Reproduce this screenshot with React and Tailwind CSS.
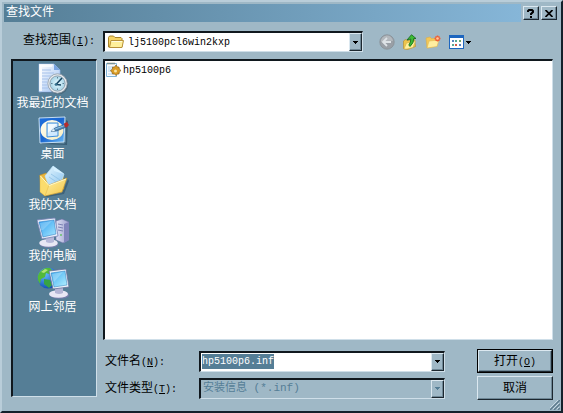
import { useEffect, useRef } from "react";

const FILES = [{ id: "hp5100p6", name: "hp5100p6" }];

const PLACES = [
  { id: "recent", label: "我最近的文档", Icon: RecentIcon },
  { id: "desktop", label: "桌面", Icon: DesktopIcon },
  { id: "documents", label: "我的文档", Icon: DocumentsIcon },
  { id: "computer", label: "我的电脑", Icon: ComputerIcon },
  { id: "network", label: "网上邻居", Icon: NetworkIcon },
];

const TOOLS = [
  { id: "back", label: "后退", Icon: BackIcon },
  { id: "up", label: "向上一级", Icon: UpIcon },
  { id: "new", label: "新建文件夹", Icon: NewFolderIcon },
];

const SUNKEN = "border border-t-2 border-l-2 border-t-[#10181e] border-l-[#10181e] border-b-[#cfdfe9] border-r-[#cfdfe9]";
const RAISED = "border border-t-[#dbe8f0] border-l-[#dbe8f0] border-b-[#1c272f] border-r-[#1c272f] shadow-[inset_-1px_-1px_0_#6e8796]";

// === Icons ===
function RecentIcon() {
  return (
    <svg width="32" height="32" viewBox="0 0 32 32">
      <defs>
        <linearGradient id="rc-page" x1="0" y1="0" x2="1" y2="1">
          <stop offset="0" stopColor="#ffffff" /><stop offset="1" stopColor="#9cc0f2" />
        </linearGradient>
        <radialGradient id="rc-face"><stop offset="0" stopColor="#e9fbff" /><stop offset="1" stopColor="#a4d3e6" /></radialGradient>
      </defs>
      <path d="M3 29h18l2 1H5z" fill="#36586d" opacity=".6" />
      <path d="M2 1h15l6 6v22H2z" fill="url(#rc-page)" stroke="#8fb2e4" strokeWidth=".7" />
      <path d="M2 1h14l-1 3H5v24H2z" fill="#fff" opacity=".7" />
      <path d="M17 1v6h6z" fill="#79a5e2" />
      <path d="M5 7h9M5 10h12M5 13h9M5 16h6M5 19h5M5 22h5M5 25h6" stroke="#a6c1ea" />
      <circle cx="21.500" cy="21.500" r="9.800" fill="#3f5c6d" opacity=".6" />
      <circle cx="20.500" cy="20.500" r="9.700" fill="#e6eaee" stroke="#8c98a3" strokeWidth=".8" />
      <circle cx="20.500" cy="20.500" r="7.600" fill="url(#rc-face)" stroke="#8ea0ad" />
      <path d="M20.500 14v1.500M20.500 25.500V27M14 20.500h1.500M25.500 20.500H27" stroke="#5f8296" />
      <path d="M25 15l-6 6.500 5 .5" stroke="#174663" strokeWidth="1.500" fill="none" />
      <circle cx="19" cy="21.500" r="1.300" fill="#34718f" />
    </svg>
  );
}

function DesktopIcon() {
  return (
    <svg width="32" height="32" viewBox="0 0 32 32">
      <defs>
        <linearGradient id="dk-pad" x1="0" y1="0" x2="1" y2="1">
          <stop offset="0" stopColor="#1f6fdc" /><stop offset=".5" stopColor="#1a66d0" /><stop offset="1" stopColor="#6cbcf7" />
        </linearGradient>
        <linearGradient id="dk-in" x1="0" y1="0" x2="1" y2="1">
          <stop offset="0" stopColor="#fffef2" /><stop offset="1" stopColor="#f7edc0" />
        </linearGradient>
      </defs>
      <path d="M4 28l23 2 2-2V6l2 1-1 24-25-1z" fill="#2f5168" opacity=".7" />
      <path d="M2 4l26-1-1 25-24 1z" fill="url(#dk-pad)" stroke="#d3e8f8" strokeWidth=".9" />
      <ellipse cx="15" cy="16" rx="11.500" ry="10" fill="url(#dk-in)" />
      <path d="M10 9h11v13l-11 1z" fill="#cfe9ff" stroke="#3f8fdc" />
      <path d="M11 10h9l-9 9z" fill="#f1faff" />
      <path d="M14 17.500l4-3.500 10-3.500 1.500 2.500-10 4z" fill="#4f86b4" stroke="#1f4c75" strokeWidth=".6" />
      <path d="M18 14.500l9-3.200.5.800-9 3.300z" fill="#8fc4e6" />
      <path d="M14 17.500l3-2.800.9 2.200z" fill="#edf6fb" />
      <path d="M27 9.500l3-1.500 2 3-2.500 2.500-1.700-.5z" fill="#b52c2c" />
    </svg>
  );
}

function DocumentsIcon() {
  return (
    <svg width="32" height="32" viewBox="0 0 32 32">
      <defs>
        <linearGradient id="dc-front" x1="0" y1="0" x2="1" y2="1">
          <stop offset="0" stopColor="#fff8b4" /><stop offset="1" stopColor="#f4c648" />
        </linearGradient>
        <linearGradient id="dc-page" x1="0" y1="0" x2="1" y2="1">
          <stop offset="0" stopColor="#e8f8ff" /><stop offset="1" stopColor="#86c1ee" />
        </linearGradient>
      </defs>
      <path d="M7 31l18-3 6-14 1 2-5 13-17 3z" fill="#2f5066" opacity=".6" />
      <path d="M3 10l6-2 2 2 15-1 1 15-17 5-5-3z" fill="#e9b43a" stroke="#ad811f" strokeWidth=".5" />
      <path d="M8 11l8-10 11 8-4 13-10 2z" fill="url(#dc-page)" stroke="#bce5fc" strokeWidth=".7" />
      <path d="M16 1l1 5 10 3z" fill="#d6f0ff" />
      <path d="M14 9l9 6M12 12l9 6" stroke="#8fc0e4" strokeWidth=".8" />
      <path d="M3 10l9 10 18-7-5 14-17 4-4-4z" fill="url(#dc-front)" stroke="#c99625" strokeWidth=".6" />
      <path d="M3 10v17l5 4 4-11z" fill="#fbdc6d" stroke="#d9a93a" strokeWidth=".4" />
      <path d="M3.500 11l8.500 9.500L29 14" fill="none" stroke="#fff9cc" />
    </svg>
  );
}

function ComputerIcon() {
  return (
    <svg width="32" height="32" viewBox="0 0 32 32">
      <defs>
        <linearGradient id="pc-scr" x1="0" y1="0" x2="1" y2="1">
          <stop offset="0" stopColor="#2f9eee" /><stop offset="1" stopColor="#a5e6ff" />
        </linearGradient>
        <linearGradient id="pc-case" x1="0" y1="0" x2="1" y2="0">
          <stop offset="0" stopColor="#dfe2f5" /><stop offset="1" stopColor="#9a9dcb" />
        </linearGradient>
      </defs>
      <path d="M19 5l6-2 7 3v18l-6 3-7-3z" fill="url(#pc-case)" stroke="#6b70a5" strokeWidth=".6" />
      <path d="M27 8l5-2v18l-5 3z" fill="#7f84ba" />
      <path d="M21 8l5 1M21 11l5 1M21 14l5 1" stroke="#7b82b4" />
      <circle cx="24" cy="19" r="1" fill="#67c168" />
      <ellipse cx="12" cy="28" rx="9.500" ry="3.800" fill="#777dab" />
      <ellipse cx="11.500" cy="27" rx="9.300" ry="3.800" fill="#e8e7f4" />
      <path d="M9 20h8v6q-4 2-8 0z" fill="#b7b9da" />
      <path d="M0 4l18-2 3 18-16 3z" fill="#e9f0fb" stroke="#7883b5" strokeWidth=".8" />
      <path d="M2 6l15-2 2 14-13 3z" fill="url(#pc-scr)" stroke="#2875bb" strokeWidth=".5" />
      <path d="M3 7l12-2-9 9H4z" fill="#fff" opacity=".22" />
    </svg>
  );
}

function NetworkIcon() {
  return (
    <svg width="32" height="32" viewBox="0 0 32 32">
      <defs>
        <radialGradient id="nt-globe" cx=".35" cy=".3" r=".8">
          <stop offset="0" stopColor="#65bdff" /><stop offset="1" stopColor="#0a43ac" />
        </radialGradient>
        <linearGradient id="nt-scr" x1="0" y1="0" x2="1" y2="1">
          <stop offset="0" stopColor="#3caaf0" /><stop offset="1" stopColor="#b4f0ff" />
        </linearGradient>
      </defs>
      <circle cx="11" cy="11" r="10.500" fill="url(#nt-globe)" />
      <path d="M2 6q5-6 11-5l3 3-4 3-3-1-1 4-4 2-1 5q-4-5-1-11z" fill="#53b93a" />
      <path d="M7 12l6 1 2 5-3 3-5-4z" fill="#37a344" />
      <path d="M4 5l4-3 3 1-4 3z" fill="#b1e479" />
      <ellipse cx="22.500" cy="28" rx="9.500" ry="3.800" fill="#777dab" />
      <ellipse cx="21.500" cy="27" rx="9.500" ry="3.800" fill="#e8e7f4" />
      <path d="M18 20h8v6q-4 2-8 0z" fill="#b4b5d5" />
      <path d="M12 4l17-2 3 18-16 2z" fill="#edf4fa" stroke="#646f9a" strokeWidth=".8" />
      <path d="M14 6l14-2 2 14-13 2z" fill="url(#nt-scr)" stroke="#2c79b9" strokeWidth=".5" />
      <path d="M15 7l11-2-9 10z" fill="#fff" opacity=".25" />
    </svg>
  );
}

function FolderIcon() {
  return (
    <svg width="16" height="16" viewBox="0 0 16 16" className="shrink-0">
      <path d="M.5 3.500l1-1.500h4L7 3.500h6l1 1V13H.5z" fill="#f5d365" stroke="#a8842c" />
      <path d="M3 6.500h12.500L14 13.500H1.500z" fill="#fff09b" stroke="#b8923a" />
      <path d="M3.500 7.500h10.500" stroke="#fffbe0" />
    </svg>
  );
}

function InfIcon() {
  return (
    <svg width="16" height="16" viewBox="0 0 16 16" className="shrink-0">
      <path d="M1.500 1.500h10v13h-10z" fill="#f7fbff" stroke="#7fb3d8" />
      <path d="M3 .5v2M5 .5v2M7 .5v2M9 .5v2" stroke="#6c6440" strokeWidth=".8" />
      <path d="M3 5h5M3 7h4M3 9h3M3 12h6" stroke="#b4d6ee" />
      <path d="M11 3l1.500 2H14l.3 2 1.700 1.500-1.700 1.500-.3 2h-1.500L11 13.500 9.500 12h-2l-.5-1.500-1.500-2L7.500 7V5h2z" fill="#d99b25" stroke="#7a5518" strokeWidth=".6" />
      <circle cx="10.500" cy="9" r="1.500" fill="#f9e5a3" />
    </svg>
  );
}

function BackIcon() {
  return (
    <svg width="16" height="16" viewBox="0 0 16 16">
      <circle cx="8" cy="8" r="7.200" fill="#999fa6" stroke="#888f96" strokeWidth=".8" />
      <path d="M2 8a6 6 0 0 1 12-1Q8 6 2 8z" fill="#b3b8bd" />
      <path d="M8 4L4 8l4 4M4.500 8H12" fill="none" stroke="#dde2e6" strokeWidth="1.800" />
    </svg>
  );
}

function UpIcon() {
  return (
    <svg width="16" height="16" viewBox="0 0 16 16">
      <path d="M1.500 7l2-1.500 2 1 7-1 1 7-8 3-4-1z" fill="#edc44d" stroke="#b48a29" strokeWidth=".6" />
      <path d="M2 15L4.500 9l9-2-2.500 6.500L5 15z" fill="#fff1a0" stroke="#d6ad42" strokeWidth=".6" />
      <path d="M9.500.7L14 4.500h-2.300Q12 9 8 12.500L6.800 11Q9 8 8.800 5L5 6z" fill="#3dbb35" stroke="#13661b" strokeWidth=".8" />
    </svg>
  );
}

function NewFolderIcon() {
  return (
    <svg width="16" height="16" viewBox="0 0 16 16">
      <path d="M1 4l4-1 1.500 1.500L12 4v8l-10 2z" fill="#f4c756" stroke="#dcae4a" strokeWidth=".6" />
      <path d="M2 14l2-7 10-1-2 6.500z" fill="#ffeea0" stroke="#e0b854" strokeWidth=".6" />
      <path d="M12.500 1.500v6M9.500 4.500h6M10.500 2.500l4 4M14.500 2.500l-4 4" stroke="#ee5f35" strokeWidth="1.500" />
      <circle cx="12.500" cy="4.500" r="1.300" fill="#ffc89a" />
    </svg>
  );
}

function ViewIcon() {
  return (
    <svg width="23" height="16" viewBox="0 0 23 16" shapeRendering="crispEdges">
      <path d="M1 1h15v14H1z" fill="#1d66bf" />
      <path d="M2 4h13v10H2z" fill="#fff" />
      <path d="M4 6h2v2H4zM11 10h2v2h-2z" fill="#5c84bd" />
      <path d="M7 6h2v2H7zM4 10h2v2H4z" fill="#5aa894" />
      <path d="M11 6h2v2h-2z" fill="#73a969" />
      <path d="M7 10h2v2H7z" fill="#d65a48" />
      <path d="M18 7h5v1h-1v1h-1v1h-1V9h-1V8h-1z" fill="#000" />
    </svg>
  );
}

function Arrow({ disabled }) {
  return (
    <svg width="5" height="3" viewBox="0 0 5 3" shapeRendering="crispEdges">
      <path d="M0 0h5v1H4v1H3v1H2V2H1V1H0z" fill={disabled ? "#557e96" : "#000"} />
    </svg>
  );
}

// === Controls ===
function Key({ children }) {
  return (
    <span className="text-[10px]">(<u className="underline-offset-1">{children}</u>)</span>
  );
}

function DropFace({ disabled }) {
  return (
    <span className={"w-[13px] shrink-0 flex items-center justify-center bg-[#9fb8c6] " + RAISED}>
      <Arrow disabled={disabled} />
    </span>
  );
}

function TitleBar() {
  return (
    <header className="h-[18px] flex items-center gap-[2px] pr-[2px]">
      <h1 className="flex-1 h-full pl-[2px] text-white leading-[18px] bg-linear-to-r from-[#557e96] to-[#86b6d8]">查找文件</h1>
      <button aria-label="帮助" className={"w-4 h-[14px] flex items-center justify-center bg-[#9fb8c6] " + RAISED}>
        <svg width="8" height="9" viewBox="0 0 8 9" fill="none" stroke="#000" strokeWidth="2">
          <path d="M1 3V2l1-1h3l1 1v1L4 5v1M4 7v2" />
        </svg>
      </button>
      <button aria-label="关闭" className={"w-4 h-[14px] flex items-center justify-center bg-[#9fb8c6] " + RAISED}>
        <svg width="8" height="7" viewBox="0 0 8 7" stroke="#000" strokeWidth="1.700">
          <path d="M.5 0l7 7M7.500 0l-7 7" />
        </svg>
      </button>
    </header>
  );
}

function PlacesBar() {
  return (
    <nav className={"w-[86px] shrink-0 flex flex-col bg-[#557e96] pt-[2px] pr-1 " + SUNKEN}>
      {PLACES.map(({ id, label, Icon }) => (
        <button key={id} className="h-[51px] flex flex-col items-center text-white">
          <Icon />
          <span className="leading-[18px] whitespace-nowrap">{label}</span>
        </button>
      ))}
    </nav>
  );
}

export default function App() {
  const nameRef = useRef(null);

  useEffect(() => {
    nameRef.current.focus();
    nameRef.current.select();
  }, []);

  return (
    <div className="relative min-h-screen flex flex-col bg-[#9fb8c6] text-black text-[12px] font-['Liberation_Mono','Noto_Sans_CJK_SC',monospace] p-[2px] border-2 border-t-[#b9cdd9] border-l-[#b9cdd9] border-b-[#14202a] border-r-[#14202a]">
      <TitleBar />
      <form className="flex-1 flex flex-col pl-[7px] pr-[6px] pt-[9px] pb-[12px]" onSubmit={e => e.preventDefault()}>
        <div className="flex items-center mb-[7px]">
          <label htmlFor="look-in" className="w-[92px] pl-3 leading-4">
            查找范围<Key>I</Key><span className="text-[10px]">:</span>
          </label>
          <div className={"flex-1 h-[21px] flex items-stretch bg-white pl-[3px] " + SUNKEN}>
            <span className="flex items-center"><FolderIcon /></span>
            <select id="look-in" className="flex-1 min-w-0 appearance-none bg-transparent text-[10px] pl-1 outline-none">
              <option>lj5100pcl6win2kxp</option>
            </select>
            <DropFace />
          </div>
          <div className="w-[190px] flex items-center gap-[7px] pl-4">
            {TOOLS.map(({ id, label, Icon }) => (
              <button key={id} type="button" aria-label={label} disabled={id === "back"}><Icon /></button>
            ))}
            <button type="button" aria-label="查看"><ViewIcon /></button>
          </div>
        </div>

        <div className="flex-1 flex gap-[6px]">
          <PlacesBar />
          <div className="flex-1 min-w-0 flex flex-col">
            <ul className={"flex-1 bg-white " + SUNKEN}>
              {FILES.map(f => (
                <li key={f.id}>
                  <button type="button" className="flex items-center gap-[2px] h-[18px] text-[10px]">
                    <InfIcon />{f.name}
                  </button>
                </li>
              ))}
            </ul>

            <div className="grid grid-cols-[96px_1fr_76px] gap-y-[3px] items-center pt-[9px] -mb-[3px]">
              <label htmlFor="file-name" className="pl-[2px] pt-[2px] leading-4">
                文件名<Key>N</Key><span className="text-[10px]">:</span>
              </label>
              <div className={"h-[21px] mr-8 flex items-stretch bg-white " + SUNKEN}>
                <input id="file-name" ref={nameRef} defaultValue="hp5100p6.inf" autoComplete="off"
                       className="flex-1 min-w-0 text-[10px] pl-px outline-none selection:bg-[#557e96] selection:text-white" />
                <DropFace />
              </div>
              <button type="submit" className="h-6 border border-black">
                <span className={"h-full pt-[2px] flex items-center justify-center " + RAISED}>
                  <span>打开<Key>O</Key></span>
                </span>
              </button>

              <label htmlFor="file-type" className="pl-[2px] pt-[2px] leading-4">
                文件类型<Key>T</Key><span className="text-[10px]">:</span>
              </label>
              <div className={"h-[21px] mr-8 flex items-stretch " + SUNKEN}>
                <select id="file-type" disabled className="flex-1 min-w-0 appearance-none bg-transparent text-[11px] text-[#557e96] opacity-100 pl-[2px]">
                  <option>安装信息 (*.inf)</option>
                </select>
                <DropFace disabled />
              </div>
              <button type="button" className={"h-6 pt-[2px] " + RAISED}>取消</button>
            </div>
          </div>
        </div>
      </form>
      <svg className="absolute right-px bottom-px" width="10" height="10" viewBox="0 0 10 10">
        <path d="M0 10L10 0M4 10l6-6M8 10l2-2" stroke="#5d7b8d" strokeWidth="1.500" />
        <path d="M-1 9L9-1M3 9l6-6M7 9l2-2" stroke="#dbe8f0" strokeWidth=".7" />
      </svg>
    </div>
  );
}
